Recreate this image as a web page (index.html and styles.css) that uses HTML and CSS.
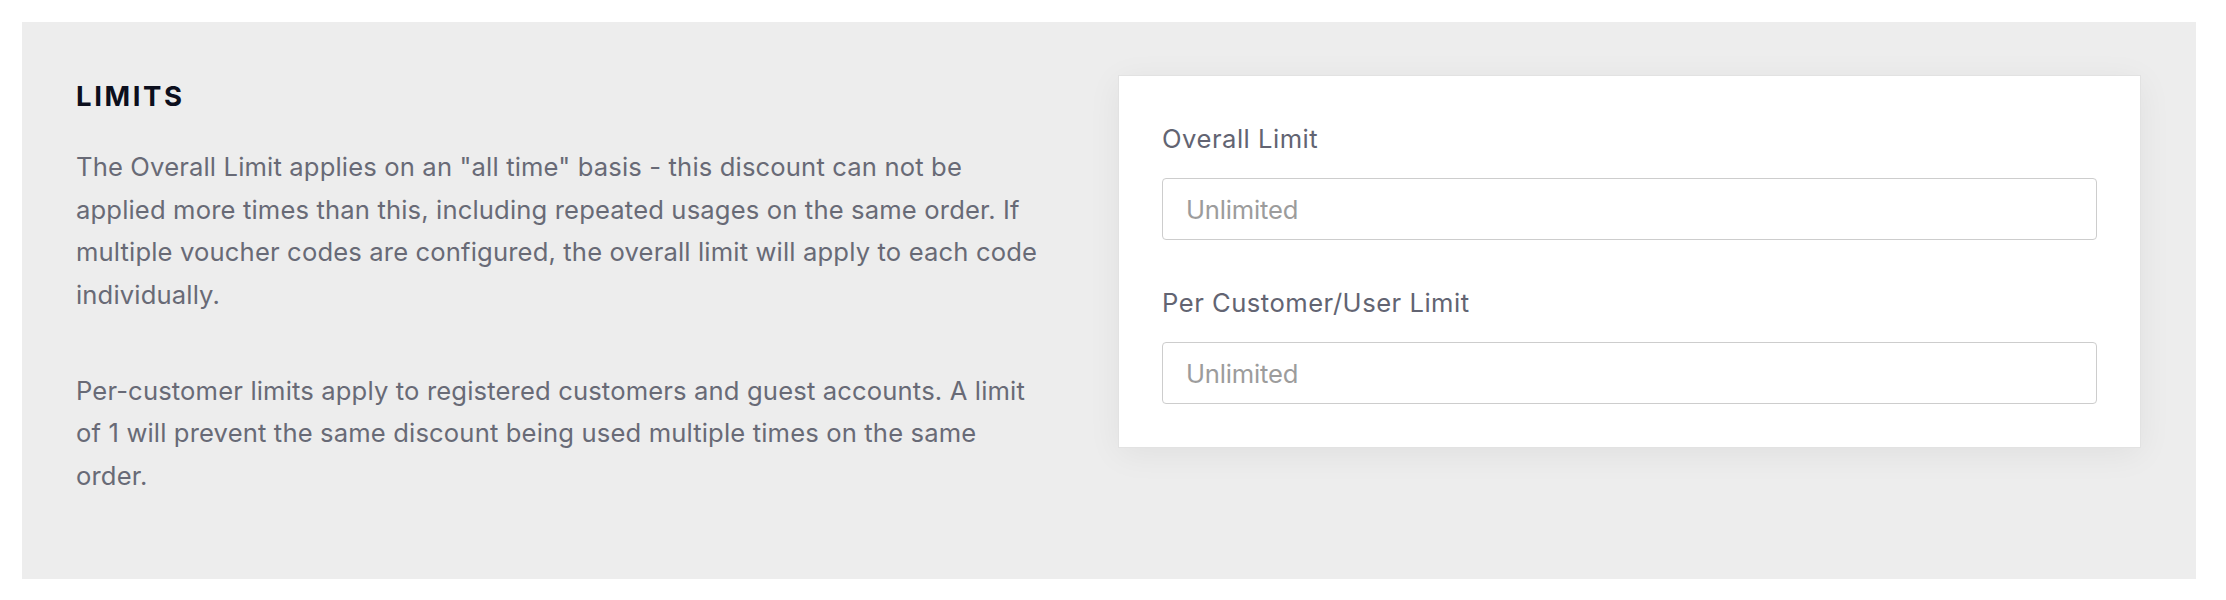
FILE: index.html
```html
<!DOCTYPE html>
<html lang="en">
<head>
<meta charset="utf-8">
<title>Limits</title>
<link rel="stylesheet" href="styles.css">
</head>
<body>
<div class="page">
  <section class="panel">
    <div class="intro">
      <h2 class="title">LIMITS</h2>
      <p class="desc">The Overall Limit applies on an "all time" basis - this discount can not be applied more times than this, including repeated usages on the same order. If multiple voucher codes are configured, the overall limit will apply to each code individually.</p>
      <p class="desc">Per-customer limits apply to registered customers and guest accounts. A limit of 1 will prevent the same discount being used multiple times on the same order.</p>
    </div>
    <div class="card">
      <div class="field">
        <label class="label" for="overall">Overall Limit</label>
        <input class="input" id="overall" type="text" placeholder="Unlimited">
      </div>
      <div class="field">
        <label class="label" for="per">Per Customer/User Limit</label>
        <input class="input" id="per" type="text" placeholder="Unlimited">
      </div>
    </div>
  </section>
</div>
</body>
</html>
```

FILE: styles.css
```css
* { box-sizing: border-box; }
html, body { margin: 0; padding: 0; background: #ffffff; }
body { font-family: Inter, "Noto Sans", sans-serif; }

.page {
  padding: 22px 30px 21px 22px;
}

.panel {
  background: #ededed;
  padding: 53px 55px 82px 54px;
  display: grid;
  grid-template-columns: 967px 1fr;
  column-gap: 75px;
  align-items: start;
}

.title {
  margin: 0 0 29px 0;
  font-size: 27.5px;
  line-height: 42px;
  font-weight: 700;
  letter-spacing: 2.6px;
  color: #0c0f1d;
}

.desc {
  margin: 0;
  font-size: 25.6px;
  line-height: 42.5px;
  color: #686a76;
  letter-spacing: 0.15px;
}

.desc + .desc { margin-top: 53.5px; }

.card {
  background: #ffffff;
  border: 1px solid #e2e2e2;
  box-shadow: 0 6px 32px rgba(0, 0, 0, 0.06);
  padding: 45px 43px 43px 43px;
  display: flex;
  flex-direction: column;
  gap: 45px;
}

.field {
  display: flex;
  flex-direction: column;
  gap: 21px;
}

.label {
  font-size: 25.6px;
  line-height: 36px;
  color: #626472;
  letter-spacing: 0.5px;
}

.input {
  height: 62px;
  width: 100%;
  border: 1px solid #cdcdcd;
  border-radius: 4px;
  padding: 0 23px;
  font-family: Inter, "Noto Sans", sans-serif;
  font-size: 25.6px;
  color: #333;
  background: #fff;
  letter-spacing: -0.2px;
  outline: none;
}

.input::placeholder { color: #9c9c9c; }
```
